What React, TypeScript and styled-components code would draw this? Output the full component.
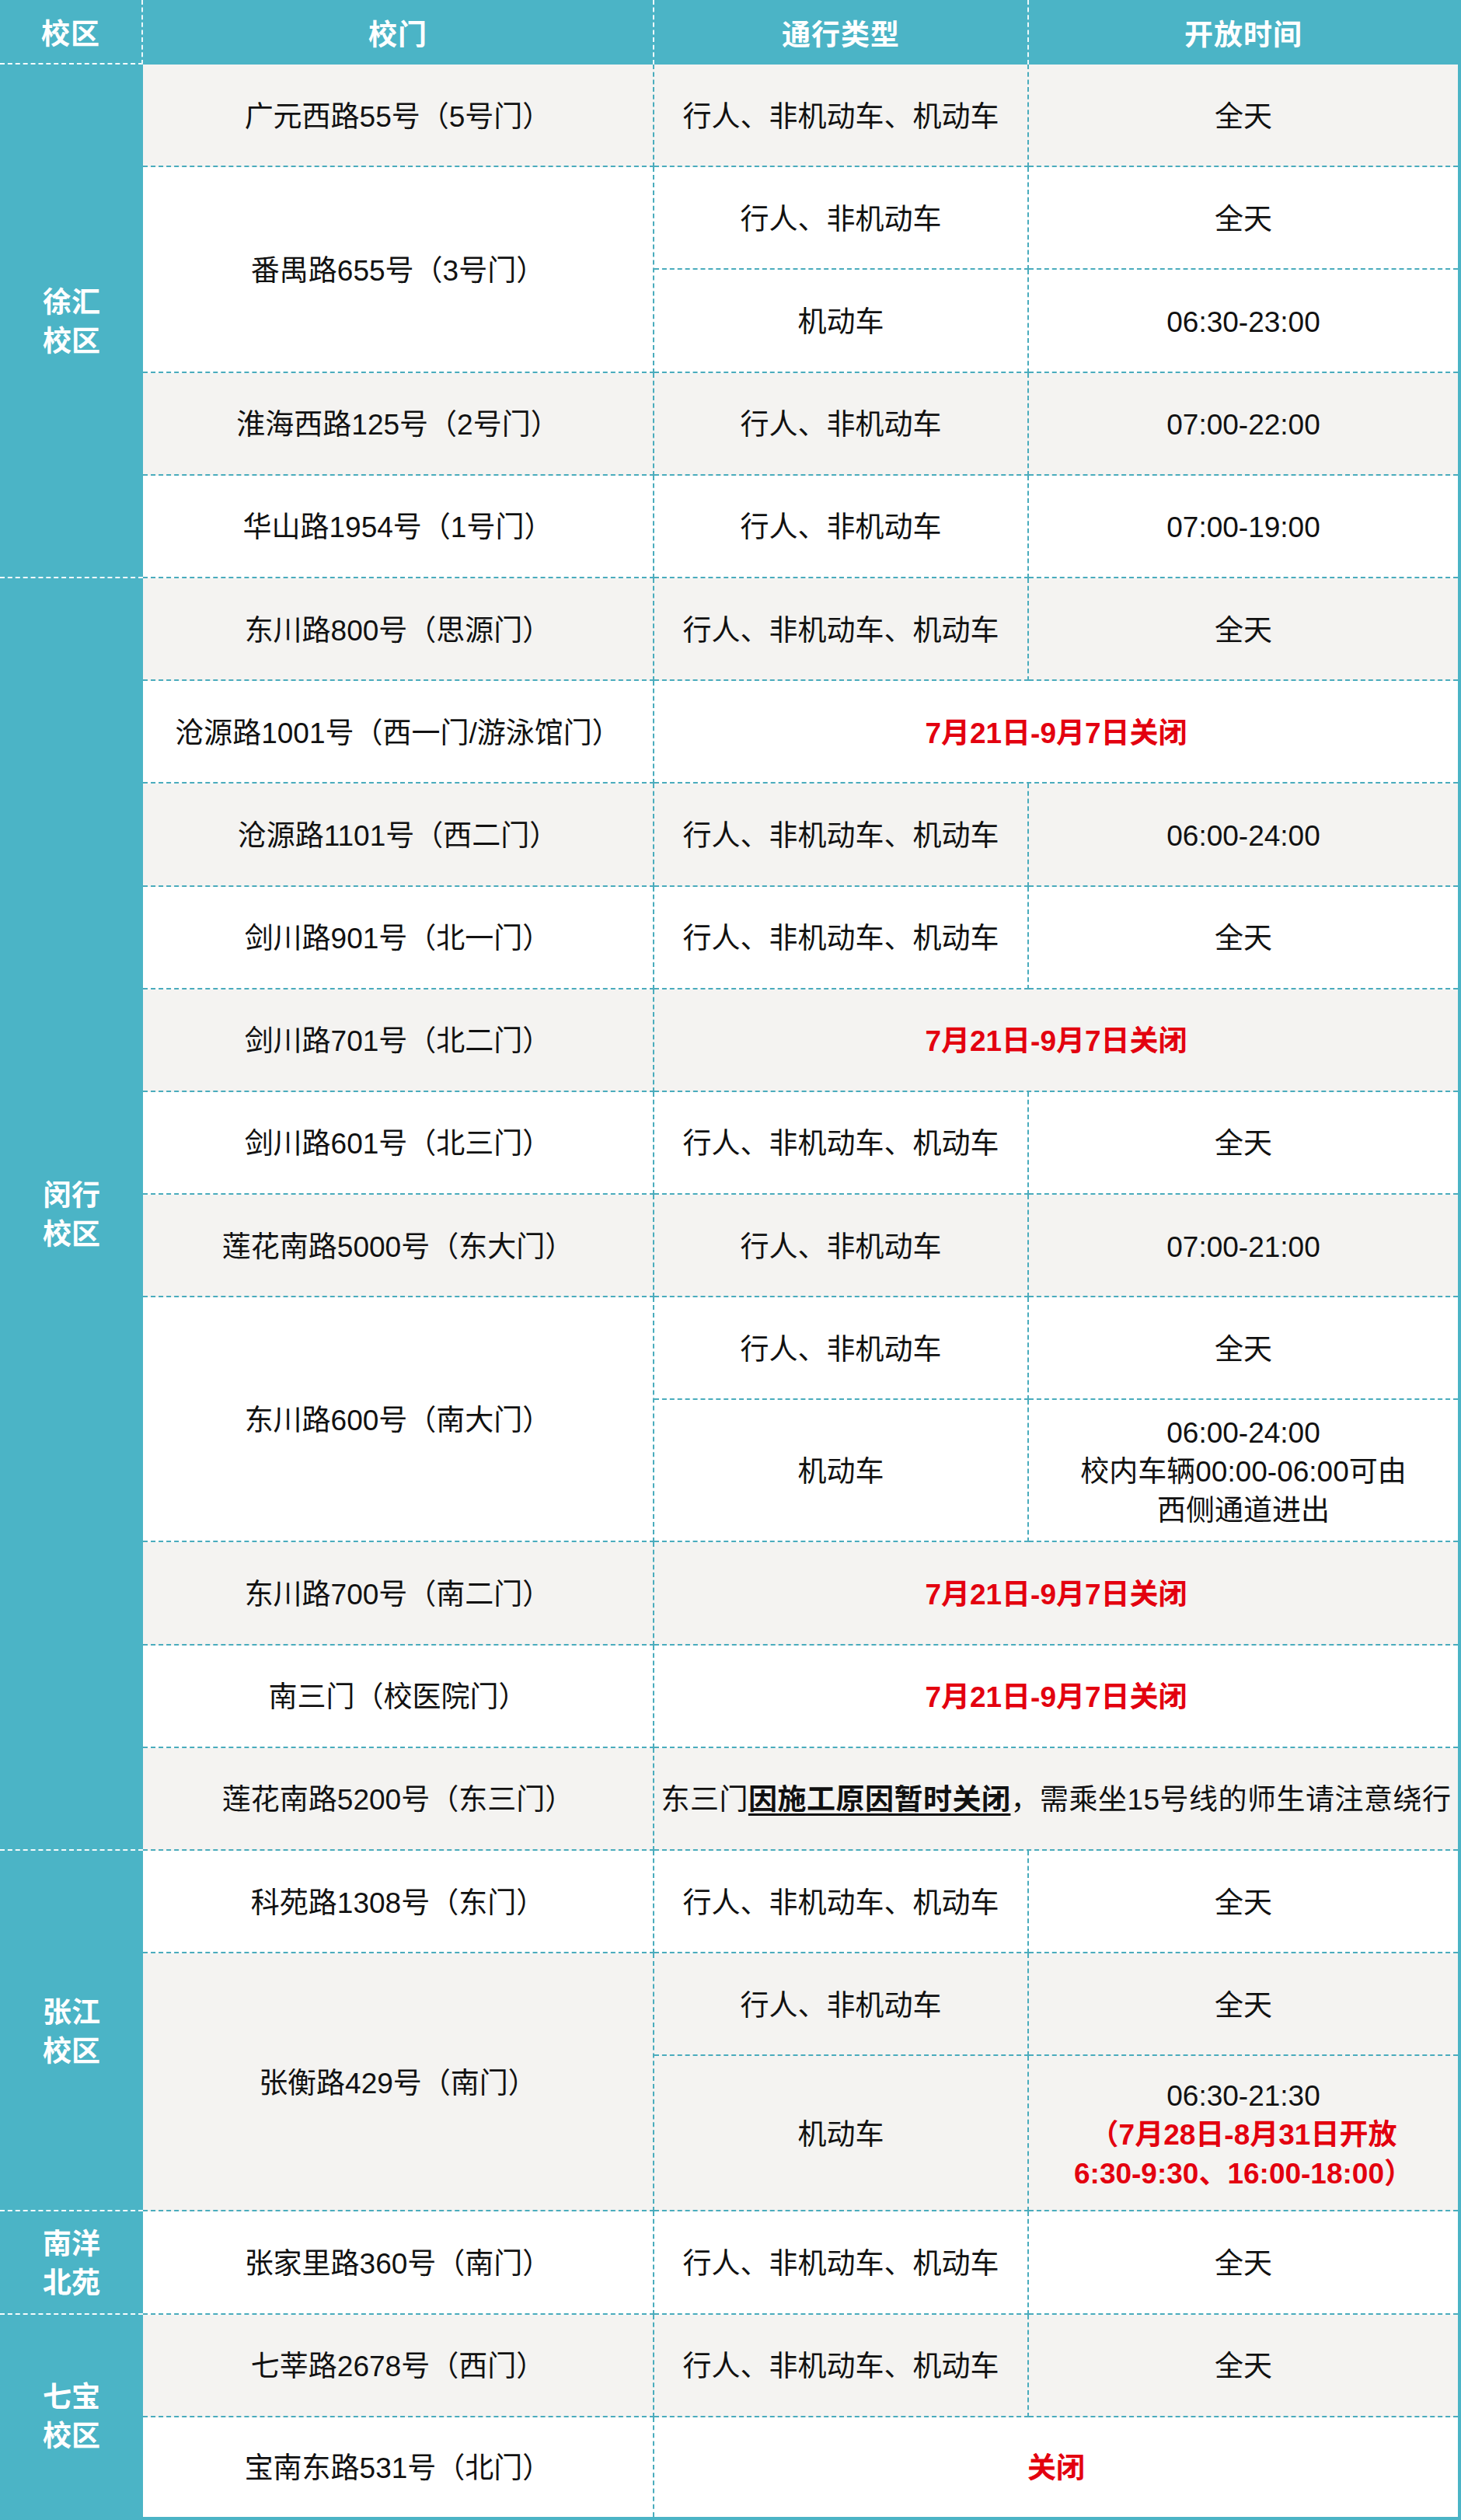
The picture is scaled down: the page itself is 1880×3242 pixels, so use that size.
import React from "react";
import styled, { createGlobalStyle } from "styled-components";

const TEAL = "#4bb4c6";
const DASH = "#4aacbd";
const GRAY = "#f4f3f1";
const RED = "#e3000f";

type Slot = {
    type: string;
    time: React.ReactNode;
};

type Gate = {
    name: string;
    slots?: Slot[];
    note?: React.ReactNode;
};

type Campus = {
    name: string[];
    gates: Gate[];
};


const GlobalStyle = createGlobalStyle`
    html, body {
        margin: 0;
        padding: 0;
        background: ${TEAL};
    }

    body {
        font-family: "Liberation Sans", "Noto Sans CJK SC", sans-serif;
        color: #111;
    }
`;


const Sheet = styled.div`
    width: 1880px;
    box-sizing: border-box;
    padding: 0 4px 4px 0;
    background: ${TEAL};
`;


const Grid = styled.div`
    display: grid;
    grid-template-columns: 184px 658px 482px 552px;
    grid-template-rows:
        83px repeat(13, 132.2px) 183px repeat(5, 132.2px) 200px
        repeat(2, 132.2px) 128px;
`;


const HeadCell = styled.div<{ $divider?: boolean; $underline?: boolean }>`
    display: flex;
    align-items: center;
    justify-content: center;
    box-sizing: border-box;
    color: #fff;
    font-size: 37px;
    font-weight: 700;
    letter-spacing: 1px;
    border-right: ${(p) => (p.$divider ? "2px dashed rgba(255, 255, 255, 0.9)" : "none")};
    border-bottom: ${(p) => (p.$underline ? "2px dashed rgba(255, 255, 255, 0.95)" : "none")};
`;


const CampusCell = styled.div<{ $rows: number; $last?: boolean }>`
    grid-row: span ${(p) => p.$rows};
    display: flex;
    flex-direction: column;
    align-items: center;
    justify-content: center;
    box-sizing: border-box;
    padding-top: 5px;
    color: #fff;
    font-size: 37px;
    font-weight: 700;
    line-height: 50px;
    border-bottom: ${(p) => (p.$last ? "none" : "2px dashed rgba(255, 255, 255, 0.95)")};
`;


const Cell = styled.div<{
    $rows?: number;
    $cols?: number;
    $shade?: boolean;
    $right?: boolean;
    $bottom?: boolean;
    $stack?: boolean;
}>`
    grid-row: span ${(p) => p.$rows ?? 1};
    grid-column: span ${(p) => p.$cols ?? 1};
    display: flex;
    flex-direction: ${(p) => (p.$stack ? "column" : "row")};
    align-items: center;
    justify-content: center;
    box-sizing: border-box;
    padding-top: 5px;
    background: ${(p) => (p.$shade ? GRAY : "#fff")};
    font-size: 37px;
    line-height: 50px;
    text-align: center;
    white-space: nowrap;
    border-right: ${(p) => (p.$right ? `2px dashed ${DASH}` : "none")};
    border-bottom: ${(p) => (p.$bottom ? `2px dashed ${DASH}` : "none")};
`;


const Line = styled.span<{ $red?: boolean }>`
    display: block;
    color: ${(p) => (p.$red ? RED : "inherit")};
    font-weight: ${(p) => (p.$red ? 700 : 400)};
`;


const RedText = styled.span`
    color: ${RED};
    font-weight: 700;
`;


const NoteText = styled.span`
    font-size: 37px;
    letter-spacing: 0.5px;
`;


const Strong = styled.span`
    font-weight: 700;
    text-decoration: underline;
    text-decoration-thickness: 3px;
    text-underline-offset: 5px;
`;


const closed = <RedText>7月21日-9月7日关闭</RedText>;

const campuses: Campus[] = [
    {
        name: ["徐汇", "校区"],
        gates: [
            { name: "广元西路55号（5号门）", slots: [{ type: "行人、非机动车、机动车", time: "全天" }] },
            {
                name: "番禺路655号（3号门）",
                slots: [
                    { type: "行人、非机动车", time: "全天" },
                    { type: "机动车", time: "06:30-23:00" },
                ],
            },
            { name: "淮海西路125号（2号门）", slots: [{ type: "行人、非机动车", time: "07:00-22:00" }] },
            { name: "华山路1954号（1号门）", slots: [{ type: "行人、非机动车", time: "07:00-19:00" }] },
        ],
    },
    {
        name: ["闵行", "校区"],
        gates: [
            { name: "东川路800号（思源门）", slots: [{ type: "行人、非机动车、机动车", time: "全天" }] },
            { name: "沧源路1001号（西一门/游泳馆门）", note: closed },
            { name: "沧源路1101号（西二门）", slots: [{ type: "行人、非机动车、机动车", time: "06:00-24:00" }] },
            { name: "剑川路901号（北一门）", slots: [{ type: "行人、非机动车、机动车", time: "全天" }] },
            { name: "剑川路701号（北二门）", note: closed },
            { name: "剑川路601号（北三门）", slots: [{ type: "行人、非机动车、机动车", time: "全天" }] },
            { name: "莲花南路5000号（东大门）", slots: [{ type: "行人、非机动车", time: "07:00-21:00" }] },
            {
                name: "东川路600号（南大门）",
                slots: [
                    { type: "行人、非机动车", time: "全天" },
                    {
                        type: "机动车",
                        time: (
                            <>
                                <Line>06:00-24:00</Line>
                                <Line>校内车辆00:00-06:00可由</Line>
                                <Line>西侧通道进出</Line>
                            </>
                        ),
                    },
                ],
            },
            { name: "东川路700号（南二门）", note: closed },
            { name: "南三门（校医院门）", note: closed },
            {
                name: "莲花南路5200号（东三门）",
                note: (
                    <NoteText>
                        东三门<Strong>因施工原因暂时关闭</Strong>，需乘坐15号线的师生请注意绕行
                    </NoteText>
                ),
            },
        ],
    },
    {
        name: ["张江", "校区"],
        gates: [
            { name: "科苑路1308号（东门）", slots: [{ type: "行人、非机动车、机动车", time: "全天" }] },
            {
                name: "张衡路429号（南门）",
                slots: [
                    { type: "行人、非机动车", time: "全天" },
                    {
                        type: "机动车",
                        time: (
                            <>
                                <Line>06:30-21:30</Line>
                                <Line $red>（7月28日-8月31日开放</Line>
                                <Line $red>6:30-9:30、16:00-18:00）</Line>
                            </>
                        ),
                    },
                ],
            },
        ],
    },
    {
        name: ["南洋", "北苑"],
        gates: [
            { name: "张家里路360号（南门）", slots: [{ type: "行人、非机动车、机动车", time: "全天" }] },
        ],
    },
    {
        name: ["七宝", "校区"],
        gates: [
            { name: "七莘路2678号（西门）", slots: [{ type: "行人、非机动车、机动车", time: "全天" }] },
            { name: "宝南东路531号（北门）", note: <RedText>关闭</RedText> },
        ],
    },
];


const App: React.FC = () => {
    const totalGates = campuses.reduce((n, c) => n + c.gates.length, 0);
    let gateIndex = 0;

    return (
        <>
            <GlobalStyle />
            <Sheet>
                <Grid>
                    <HeadCell $divider $underline>校区</HeadCell>
                    <HeadCell $divider>校门</HeadCell>
                    <HeadCell $divider>通行类型</HeadCell>
                    <HeadCell>开放时间</HeadCell>

                    {campuses.map((campus, ci) => {
                        const rows = campus.gates.reduce((n, g) => n + (g.slots ? g.slots.length : 1), 0);
                        const lastCampus = ci === campuses.length - 1;

                        return (
                            <React.Fragment key={campus.name.join("")}>
                                <CampusCell $rows={rows} $last={lastCampus}>
                                    {campus.name.map((l) => (
                                        <span key={l}>{l}</span>
                                    ))}
                                </CampusCell>

                                {campus.gates.map((gate) => {
                                    const idx = gateIndex++;
                                    const shade = idx % 2 === 0;
                                    const lastGate = idx === totalGates - 1;
                                    const span = gate.slots ? gate.slots.length : 1;

                                    return (
                                        <React.Fragment key={gate.name}>
                                            <Cell $rows={span} $shade={shade} $right $bottom={!lastGate}>
                                                {gate.name}
                                            </Cell>

                                            {gate.note && (
                                                <Cell $cols={2} $shade={shade} $bottom={!lastGate}>
                                                    {gate.note}
                                                </Cell>
                                            )}

                                            {gate.slots?.map((slot, si) => (
                                                <React.Fragment key={slot.type}>
                                                    <Cell $shade={shade} $right $bottom={!lastGate || si < span - 1}>
                                                        {slot.type}
                                                    </Cell>
                                                    <Cell $shade={shade} $stack $bottom={!lastGate || si < span - 1}>
                                                        {slot.time}
                                                    </Cell>
                                                </React.Fragment>
                                            ))}
                                        </React.Fragment>
                                    );
                                })}
                            </React.Fragment>
                        );
                    })}
                </Grid>
            </Sheet>
        </>
    );
};


export default App;
